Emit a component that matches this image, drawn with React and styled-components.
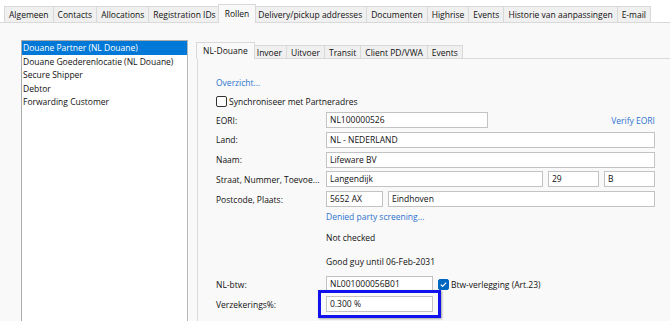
import React from "react";
import styled, { createGlobalStyle } from "styled-components";

const GlobalStyle = createGlobalStyle`
  html, body {
    margin: 0;
    padding: 0;
    background: #ffffff;
  }
  body {
    font-family: "Open Sans", "Noto Sans", sans-serif;
    font-size: 8.5px;
    color: #111111;
  }
  #root {
    width: 670px;
    height: 321px;
    overflow: hidden;
  }
`;

const outerTabs = [
  "Algemeen",
  "Contacts",
  "Allocations",
  "Registration IDs",
  "Rollen",
  "Delivery/pickup addresses",
  "Documenten",
  "Highrise",
  "Events",
  "Historie van aanpassingen",
  "E-mail",
];

const innerTabs = ["NL-Douane", "Invoer", "Uitvoer", "Transit", "Client PD/VWA", "Events"];

const roles = [
  "Douane Partner (NL Douane)",
  "Douane Goederenlocatie (NL Douane)",
  "Secure Shipper",
  "Debtor",
  "Forwarding Customer",
];

const Window = styled.div`
  width: 670px;
  height: 321px;
  display: flex;
  flex-direction: column;
  overflow: hidden;
  background: #ffffff;
`;

const TabStrip = styled.div`
  display: flex;
  align-items: flex-end;
  flex: none;
  box-sizing: border-box;
  height: ${(p) => (p.$inner ? 18 : 22)}px;
  padding-left: ${(p) => (p.$inner ? 2 : 5)}px;
  position: relative;
  z-index: 1;
`;

const Tab = styled.div`
  box-sizing: border-box;
  display: flex;
  align-items: center;
  white-space: nowrap;
  height: 16px;
  padding: 0 4px 1px;
  margin-left: -1px;
  background: #f0f0f0;
  border: 1px solid #d9d9d9;
  border-bottom: none;

  ${(p) =>
    p.$active &&
    `
    height: 19px;
    margin: 0 -2px -1px -3px;
    padding: 0 6px 2px;
    background: #f9f9f9;
    position: relative;
    z-index: 2;
  `}
`;

const InnerTab = styled(Tab)`
  height: 13px;
  padding-bottom: 0;

  ${(p) =>
    p.$active &&
    `
    height: 17px;
    padding-bottom: 2px;
  `}
`;

const Panel = styled.div`
  flex: 1;
  display: flex;
  gap: 9px;
  padding: 17px 0 0 21px;
  background: #f9f9f9;
  border-top: 1px solid #d9d9d9;
`;

const RoleList = styled.div`
  flex: none;
  box-sizing: border-box;
  width: 167px;
  height: 300px;
  background: #ffffff;
  border: 1px solid #ababab;
  border-right-color: #b9b9b9;
`;

const RoleItem = styled.div`
  height: 13.6px;
  line-height: 13.6px;
  padding-left: 1px;
  white-space: nowrap;
  background: ${(p) => (p.$selected ? "#0078d7" : "transparent")};
  color: ${(p) => (p.$selected ? "#ffffff" : "#111111")};
`;

const Detail = styled.div`
  flex: 1;
  display: flex;
  flex-direction: column;
  min-width: 480px;
`;

const DetailPanel = styled.div`
  flex: 1;
  display: flex;
  flex-direction: column;
  padding: 18px 0 0 18px;
  background: #f9f9f9;
  border-top: 1px solid #d9d9d9;
  border-left: 1px solid #dcdcdc;
`;

const Link = styled.span`
  color: #2f74d0;
  white-space: nowrap;
`;

const LinkLine = styled.div`
  height: 12px;
  line-height: 12px;
`;

const CheckRow = styled.label`
  display: flex;
  align-items: center;
  gap: 2px;
  height: 12px;
  margin-top: ${(p) => (p.$inline ? 0 : 6)}px;
  white-space: nowrap;
`;

const Box = styled.span`
  box-sizing: border-box;
  width: 11px;
  height: 11px;
  flex: none;
  border-radius: 2px;
  display: flex;
  align-items: center;
  justify-content: center;
  background: ${(p) => (p.$checked ? "#0067c0" : "#ffffff")};
  border: 1px solid ${(p) => (p.$checked ? "#0067c0" : "#333333")};
`;

const FormGrid = styled.div`
  display: grid;
  grid-template-columns: 110px 329px;
  grid-auto-rows: 16px;
  row-gap: ${(p) => p.$gap || 3.75}px;
  margin-top: ${(p) => p.$top}px;
  align-items: center;
`;

const Label = styled.div`
  white-space: nowrap;
`;

const Fields = styled.div`
  display: flex;
  align-items: center;
  gap: 5px;
  height: 16px;
  justify-content: ${(p) => (p.$spread ? "space-between" : "flex-start")};
`;

const Input = styled.div`
  box-sizing: border-box;
  height: 16px;
  width: ${(p) => (p.$w ? `${p.$w}px` : "auto")};
  flex: ${(p) => (p.$w ? "none" : 1)};
  padding-left: 3px;
  line-height: 14px;
  background: #ffffff;
  border: 1px solid #c3c3c3;
  white-space: nowrap;
  overflow: hidden;
`;

const Notes = styled.div`
  display: flex;
  flex-direction: column;
  padding-left: 110px;
`;

const Note = styled.div`
  height: 12px;
  line-height: 12px;
  margin-top: ${(p) => p.$top}px;
  white-space: nowrap;
`;

const Highlight = styled.div`
  justify-self: start;
  margin: -6px -8px;
  padding: 3px 5px;
  border: 3px solid #1212ee;
  box-shadow: 1px 1px 2px rgba(0, 0, 0, 0.35);
`;

const Check = () => (
  <svg width="9" height="9" viewBox="0 0 9 9">
    <polyline points="1.8,4.6 3.6,6.4 7.2,2.6" fill="none" stroke="#ffffff" strokeWidth="1.2" />
  </svg>
);

export default function App() {
  return (
    <Window>
      <GlobalStyle />
      <TabStrip>
        {outerTabs.map((t) => (
          <Tab key={t} $active={t === "Rollen"}>
            {t}
          </Tab>
        ))}
      </TabStrip>
      <Panel>
        <RoleList>
          {roles.map((r, i) => (
            <RoleItem key={r} $selected={i === 0}>
              {r}
            </RoleItem>
          ))}
        </RoleList>
        <Detail>
          <TabStrip $inner>
            {innerTabs.map((t, i) => (
              <InnerTab key={t} $active={i === 0}>
                {t}
              </InnerTab>
            ))}
          </TabStrip>
          <DetailPanel>
            <LinkLine>
              <Link>Overzicht...</Link>
            </LinkLine>
            <CheckRow>
              <Box />
              Synchroniseer met Partneradres
            </CheckRow>
            <FormGrid $top={5}>
              <Label>EORI:</Label>
              <Fields $spread>
                <Input $w={162}>NL100000526</Input>
                <Link>Verify EORI</Link>
              </Fields>
              <Label>Land:</Label>
              <Fields>
                <Input>NL - NEDERLAND</Input>
              </Fields>
              <Label>Naam:</Label>
              <Fields>
                <Input>Lifeware BV</Input>
              </Fields>
              <Label>Straat, Nummer, Toevoe...</Label>
              <Fields>
                <Input>Langendijk</Input>
                <Input $w={51}>29</Input>
                <Input $w={51}>B</Input>
              </Fields>
              <Label>Postcode, Plaats:</Label>
              <Fields>
                <Input $w={57}>5652 AX</Input>
                <Input>Eindhoven</Input>
              </Fields>
            </FormGrid>
            <Notes>
              <Note $top={4}>
                <Link>Denied party screening...</Link>
              </Note>
              <Note $top={9}>Not checked</Note>
              <Note $top={12}>Good guy until 06-Feb-2031</Note>
            </Notes>
            <FormGrid $top={8} $gap={4}>
              <Label>NL-btw:</Label>
              <Fields>
                <Input $w={107}>NL001000056B01</Input>
                <CheckRow as="span" $inline>
                  <Box $checked>
                    <Check />
                  </Box>
                  Btw-verlegging (Art.23)
                </CheckRow>
              </Fields>
              <Label>Verzekerings%:</Label>
              <Highlight>
                <Input $w={107}>0.300 %</Input>
              </Highlight>
            </FormGrid>
          </DetailPanel>
        </Detail>
      </Panel>
    </Window>
  );
}
